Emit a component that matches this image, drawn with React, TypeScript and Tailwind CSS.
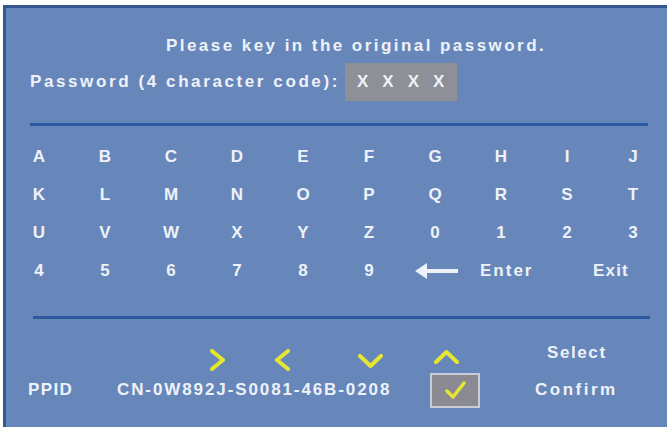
const KEYS = [
  ['A', 'B', 'C', 'D', 'E', 'F', 'G', 'H', 'I', 'J'],
  ['K', 'L', 'M', 'N', 'O', 'P', 'Q', 'R', 'S', 'T'],
  ['U', 'V', 'W', 'X', 'Y', 'Z', '0', '1', '2', '3'],
  ['4', '5', '6', '7', '8', '9'],
]

const font = { fontFamily: '"Liberation Sans", Arial, sans-serif' }

function Chevron({ d, w, h }: { d: string; w: number; h: number }) {
  return (
    <svg width={w} height={h} viewBox={`0 0 ${w} ${h}`} className="shrink-0">
      <path d={d} fill="none" stroke="#e6e632" strokeWidth="4" strokeLinecap="round" strokeLinejoin="round" />
    </svg>
  )
}

export default function App() {
  return (
    <div className="w-[667px] h-[431px] bg-white overflow-hidden" style={font}>
      <div className="ml-[3px] mt-[5px] h-[422px] bg-[#6787bb] border-l-[3px] border-t-[3px] border-[#34578f] text-[#eef2f8] font-bold">
        {/* heading */}
        <div className="pt-[26px] h-[50px] flex items-center pl-[160px] text-[17px] tracking-[2.45px] whitespace-nowrap">
          Please key in the original password.
        </div>
        <div className="mt-[5px] h-[38px] flex items-center pl-[24px]">
          <span className="w-[315px] text-[17px] tracking-[2.6px] whitespace-nowrap">Password (4 character code):</span>
          <div className="w-[112px] h-[38px] bg-[#8d9096] flex items-center pl-[12px] gap-[14px] text-[17px]">
            <span>X</span><span>X</span><span>X</span><span>X</span>
          </div>
        </div>

        <div className="mt-[22px] ml-[24px] w-[618px] h-[3px] bg-[#2d5a9e]" />

        {/* character grid */}
        <div className="mt-[12px] w-[660px] grid grid-cols-10 text-[17px]">
          {KEYS.slice(0, 3).flat().map((k) => (
            <div key={k} className="h-[38px] flex items-center justify-center">{k}</div>
          ))}
          {KEYS[3].map((k) => (
            <div key={k} className="h-[38px] flex items-center justify-center">{k}</div>
          ))}
          <div className="h-[38px] col-span-2 flex items-center pl-[13px] gap-[22px]">
            <svg width="43" height="16" viewBox="0 0 43 16" className="shrink-0">
              <path d="M0 8 L12 0 L12 6 L43 6 L43 10 L12 10 L12 16 Z" fill="#eef2f8" />
            </svg>
            <span className="tracking-[2px]">Enter</span>
          </div>
          <div className="h-[38px] col-span-2 flex items-center pl-[59px] tracking-[1.2px]">Exit</div>
        </div>

        <div className="mt-[26px] ml-[27px] w-[617px] h-[3px] bg-[#2d5a9e]" />

        {/* navigation hints */}
        <div className="mt-[25px] h-[28px] flex items-start">
          <div className="ml-[204px] mt-[5px]">
            <Chevron w={15} h={22} d="M2 2 L13 11 L2 20" />
          </div>
          <div className="ml-[50px] mt-[5px]">
            <Chevron w={15} h={22} d="M13 2 L2 11 L13 20" />
          </div>
          <div className="ml-[68px] mt-[10px]">
            <Chevron w={25} h={15} d="M2 2 L12.5 12 L23 2" />
          </div>
          <div className="ml-[51px] mt-[6px]">
            <Chevron w={25} h={15} d="M2 12 L12.5 2 L23 12" />
          </div>
          <span className="ml-[88px] text-[17px] tracking-[1.6px] leading-[17px]">Select</span>
        </div>
        <div className="h-[36px] flex items-center pl-[22px] text-[17px]">
          <span className="w-[89px] tracking-[1.4px]">PPID</span>
          <span className="w-[313px] tracking-[1.9px] whitespace-nowrap">CN-0W892J-S0081-46B-0208</span>
          <div className="w-[50px] h-[35px] bg-[#8b8a92] border-2 border-[#c9cdd8] flex items-center justify-center">
            <svg width="22" height="20" viewBox="0 0 22 20">
              <path d="M3 11 L9 17 L20 3" fill="none" stroke="#e6e632" strokeWidth="3.5" strokeLinecap="round" strokeLinejoin="round" />
            </svg>
          </div>
          <span className="ml-[55px] tracking-[2.5px]">Confirm</span>
        </div>
      </div>
    </div>
  )
}
